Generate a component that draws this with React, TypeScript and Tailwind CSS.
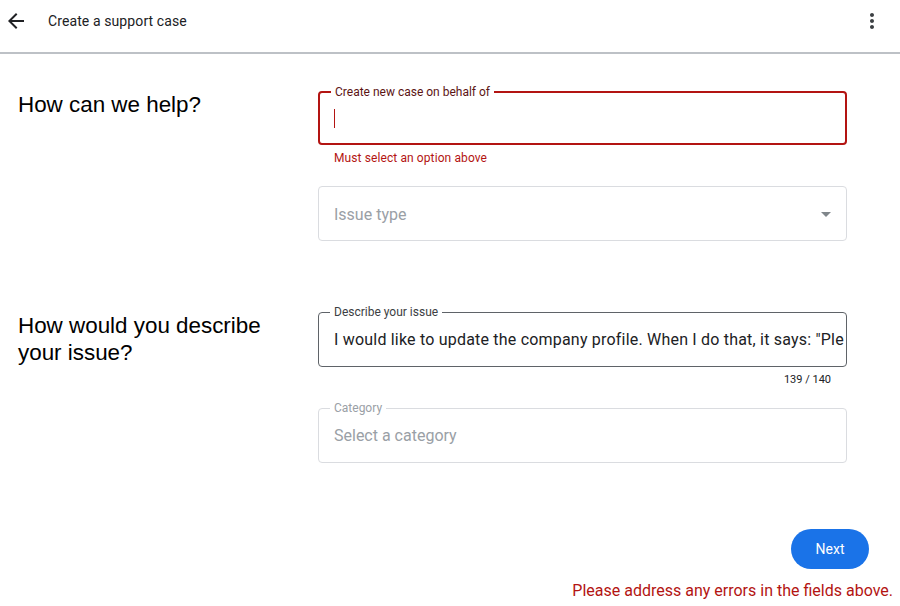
import React from "react";

const RED = "text-[#b31412]";

function FieldLabel({ text, className }: { text: string; className: string }) {
  return (
    <span className={`absolute -top-[8px] left-[11px] bg-white px-[4px] text-[12px] leading-[14px] ${className}`}>
      {text}
    </span>
  );
}

export default function App() {
  return (
    <div className="w-[900px] h-[606px] bg-white font-['Roboto',sans-serif] text-[#202124] overflow-hidden">
      {/* Top bar */}
      <header className="h-[54px] border-b-2 border-[#bdc1c6] flex items-center pl-[4px] pr-[16px] pb-[10px]">
        <svg width="24" height="24" viewBox="0 0 24 24" className="fill-[#202124]">
          <path d="M20 11H7.83l5.59-5.59L12 4l-8 8 8 8 1.41-1.41L7.83 13H20v-2z" />
        </svg>
        <span className="ml-[20px] text-[14px] tracking-[0.1px]">Create a support case</span>
        <svg width="24" height="24" viewBox="0 0 24 24" className="ml-auto fill-[#3c4043]">
          <path d="M12 8c1.1 0 2-.9 2-2s-.9-2-2-2-2 .9-2 2 .9 2 2 2zm0 2c-1.1 0-2 .9-2 2s.9 2 2 2 2-.9 2-2-.9-2-2-2zm0 6c-1.1 0-2 .9-2 2s.9 2 2 2 2-.9 2-2-.9-2-2-2z" />
        </svg>
      </header>

      <main className="pt-[37px] px-[18px]">
        {/* Section 1 */}
        <div className="grid grid-cols-[300px_529px]">
          <h2 className="font-['Liberation_Sans',Arial,sans-serif] text-[22.4px] leading-[27px] text-black">
            How can we help?
          </h2>
          <div className="flex flex-col">
            <div className="relative h-[54px] border-2 border-[#b31412] rounded-[4px] flex items-center pl-[14px]">
              <FieldLabel text="Create new case on behalf of" className="text-[#5c1414]" />
              <span className="w-px h-[19px] bg-[#b31412]" />
            </div>
            <div className={`pl-[16px] mt-[6px] text-[12px] leading-[14px] tracking-[0.1px] ${RED}`}>
              Must select an option above
            </div>
            <div className="mt-[21px] h-[55px] border border-[#dadce0] rounded-[4px] flex items-center pl-[15px] pr-[15px]">
              <span className="text-[16px] leading-[20px] mt-[2px] text-[#9aa0a6]">Issue type</span>
              <svg width="24" height="24" viewBox="0 0 24 24" className="ml-auto -mr-[7px] fill-[#80868b]">
                <path d="M7 10l5 5 5-5z" />
              </svg>
            </div>
          </div>
        </div>

        {/* Section 2 */}
        <div className="grid grid-cols-[300px_529px] mt-[71px]">
          <h2 className="font-['Liberation_Sans',Arial,sans-serif] text-[22.4px] leading-[27px] text-black">
            How would you describe
            <br />
            your issue?
          </h2>
          <div className="flex flex-col">
            <div className="relative h-[55px] border border-[#5f6368] rounded-[4px] flex items-center pl-[15px] pr-[1px]">
              <FieldLabel text="Describe your issue" className="text-[#3c4043]" />
              <span className="text-[16px] tracking-[0.2px] whitespace-nowrap overflow-hidden">
                I would like to update the company profile. When I do that, it says: "Ple
              </span>
            </div>
            <div className="text-right pr-[16px] mt-[6px] text-[11px] leading-[13px] text-[#202124]">139 / 140</div>
            <div className="relative mt-[22px] h-[55px] border border-[#dadce0] rounded-[4px] flex items-center pl-[15px]">
              <FieldLabel text="Category" className="text-[#9aa0a6]" />
              <span className="text-[16px] text-[#9aa0a6]">Select a category</span>
            </div>
          </div>
        </div>
      </main>

      {/* Footer actions */}
      <footer className="flex flex-col items-end pr-[7px] mt-[66px]">
        <button className="mr-[24px] w-[78px] h-[40px] rounded-full bg-[#1a73e8] text-white text-[14px]">
          Next
        </button>
        <div className={`mt-[12px] text-[16px] leading-[20px] ${RED}`}>
          Please address any errors in the fields above.
        </div>
      </footer>
    </div>
  );
}
